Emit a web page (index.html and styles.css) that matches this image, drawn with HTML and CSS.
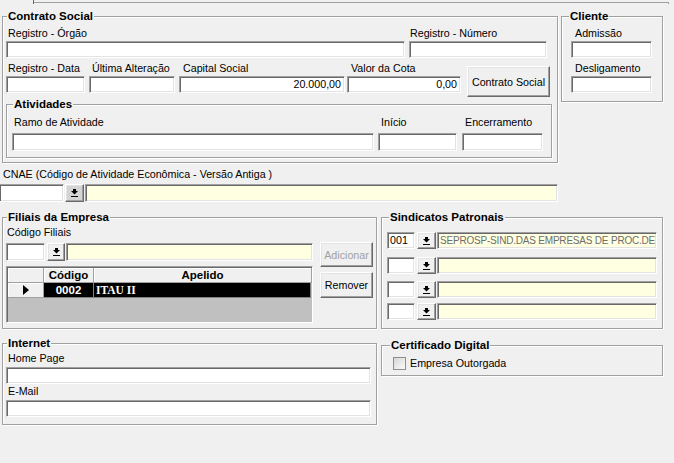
FILE: index.html
```html
<!DOCTYPE html>
<html lang="pt">
<head>
<meta charset="utf-8">
<title>Contrato Social</title>
<link rel="stylesheet" href="styles.css">
</head>
<body>
<div class="tabstrip"><div class="tab-left"></div><div class="tab-line"></div></div>

<div class="row top-row">
  <div class="group g-contrato">
    <span class="legend lg-contrato">Contrato Social</span>
    <div class="frow">
      <div class="field f-orgao"><span class="lbl">Registro - Órgão</span><div class="input"></div></div>
      <div class="field f-numero"><span class="lbl">Registro - Número</span><div class="input"></div></div>
    </div>
    <div class="frow r2">
      <div class="field f-data"><span class="lbl">Registro - Data</span><div class="input"></div></div>
      <div class="field f-ult"><span class="lbl">Última Alteração</span><div class="input"></div></div>
      <div class="field f-cap"><span class="lbl">Capital Social</span><div class="input val">20.000,00</div></div>
      <div class="field f-cota"><span class="lbl">Valor da Cota</span><div class="input val">0,00</div></div>
      <div class="btn btn-contrato">Contrato Social</div>
    </div>
    <div class="group g-ativ">
      <span class="legend lg-ativ">Atividades</span>
      <div class="frow">
        <div class="field f-ramo"><span class="lbl">Ramo de Atividade</span><div class="input tall"></div></div>
        <div class="field f-inicio"><span class="lbl">Início</span><div class="input tall"></div></div>
        <div class="field f-enc"><span class="lbl">Encerramento</span><div class="input tall"></div></div>
      </div>
    </div>
  </div>

  <div class="group g-cliente">
    <span class="legend lg-cliente">Cliente</span>
    <div class="field f-cli"><span class="lbl">Admissão</span><div class="input"></div></div>
    <div class="field f-cli f-cli2"><span class="lbl">Desligamento</span><div class="input"></div></div>
  </div>
</div>

<div class="cnae">
  <span class="lbl cnae-lbl">CNAE (Código de Atividade Econômica - Versão Antiga )</span>
  <div class="lookup lk-cnae">
    <div class="input lk-code"></div>
    <div class="btn lk-btn dark"><svg width="7" height="8" viewBox="0 0 7 8"><rect x="2" y="0" width="3" height="2" shape-rendering="crispEdges"/><path d="M0 2H7L3.5 5.6Z"/><rect x="0" y="7" width="7" height="1" shape-rendering="crispEdges"/></svg></div>
    <div class="desc lk-desc"></div>
  </div>
</div>

<div class="row mid-row">
  <div class="group g-filiais">
    <span class="legend lg-filiais">Filiais da Empresa</span>
    <div class="fil-body">
      <div class="fil-left">
        <span class="lbl fil-lbl">Código Filiais</span>
        <div class="lookup lk-fil">
          <div class="input lk-code"></div>
          <div class="btn lk-btn"><svg width="7" height="8" viewBox="0 0 7 8"><rect x="2" y="0" width="3" height="2" shape-rendering="crispEdges"/><path d="M0 2H7L3.5 5.6Z"/><rect x="0" y="7" width="7" height="1" shape-rendering="crispEdges"/></svg></div>
          <div class="desc lk-desc"></div>
        </div>
        <div class="grid">
          <div class="grow ghead">
            <div class="gc gind"></div>
            <div class="gc gcod">Código</div>
            <div class="gc gape">Apelido</div>
          </div>
          <div class="grow gsel">
            <div class="gc gind"><svg width="6" height="10" viewBox="0 0 6 10"><path d="M0 0L6 5L0 10Z"/></svg></div>
            <div class="gc gcod">0002</div>
            <div class="gc gape">ITAU II</div>
          </div>
        </div>
      </div>
      <div class="fil-right">
        <div class="btn btn-side disabled">Adicionar</div>
        <div class="btn btn-side btn-rem">Remover</div>
      </div>
    </div>
  </div>

  <div class="group g-sind">
    <span class="legend lg-sind">Sindicatos Patronais</span>
    <div class="lookup lk-sind">
      <div class="input lk-code">001</div>
      <div class="btn lk-btn"><svg width="7" height="8" viewBox="0 0 7 8"><rect x="2" y="0" width="3" height="2" shape-rendering="crispEdges"/><path d="M0 2H7L3.5 5.6Z"/><rect x="0" y="7" width="7" height="1" shape-rendering="crispEdges"/></svg></div>
      <div class="desc lk-desc sind-text">SEPROSP-SIND.DAS EMPRESAS DE PROC.DE</div>
    </div>
    <div class="lookup lk-sind s2">
      <div class="input lk-code"></div>
      <div class="btn lk-btn"><svg width="7" height="8" viewBox="0 0 7 8"><rect x="2" y="0" width="3" height="2" shape-rendering="crispEdges"/><path d="M0 2H7L3.5 5.6Z"/><rect x="0" y="7" width="7" height="1" shape-rendering="crispEdges"/></svg></div>
      <div class="desc lk-desc"></div>
    </div>
    <div class="lookup lk-sind s3">
      <div class="input lk-code"></div>
      <div class="btn lk-btn"><svg width="7" height="8" viewBox="0 0 7 8"><rect x="2" y="0" width="3" height="2" shape-rendering="crispEdges"/><path d="M0 2H7L3.5 5.6Z"/><rect x="0" y="7" width="7" height="1" shape-rendering="crispEdges"/></svg></div>
      <div class="desc lk-desc"></div>
    </div>
    <div class="lookup lk-sind s4">
      <div class="input lk-code"></div>
      <div class="btn lk-btn"><svg width="7" height="8" viewBox="0 0 7 8"><rect x="2" y="0" width="3" height="2" shape-rendering="crispEdges"/><path d="M0 2H7L3.5 5.6Z"/><rect x="0" y="7" width="7" height="1" shape-rendering="crispEdges"/></svg></div>
      <div class="desc lk-desc"></div>
    </div>
  </div>
</div>

<div class="row bottom-row">
  <div class="group g-internet">
    <span class="legend lg-internet">Internet</span>
    <span class="lbl">Home Page</span>
    <div class="input wide"></div>
    <span class="lbl lbl-mail">E-Mail</span>
    <div class="input wide"></div>
  </div>
  <div class="group g-cert">
    <span class="legend lg-cert">Certificado Digital</span>
    <div class="check-row"><span class="checkbox"></span><span class="check-lbl">Empresa Outorgada</span></div>
  </div>
</div>
</body>
</html>
```

FILE: styles.css
```css
* { box-sizing: border-box; }
html, body { margin: 0; padding: 0; }
body {
  width: 674px;
  height: 463px;
  overflow: hidden;
  background: #f0f0f0;
  font-family: "Liberation Sans", Arial, sans-serif;
  font-size: 10.7px;
  color: #000;
}

/* tab strip */
.tabstrip { display: flex; height: 4px; }
.tab-left { width: 34px; border-right: 1px solid #696969; }
.tab-line {
  width: 635px;
  height: 2px;
  margin-top: 2px;
  border-top: 1px solid #a0a0a0;
  border-right: 1px solid #a0a0a0;
}

.row { display: flex; align-items: flex-start; padding-left: 2px; }
.frow { display: flex; align-items: flex-start; }

/* group boxes */
.group {
  position: relative;
  border: 1px solid #a0a0a0;
  box-shadow: 1px 1px 0 #fff, inset 1px 1px 0 #fff;
}
.legend {
  position: absolute;
  top: -8px;
  padding: 0 1px;
  background: #f0f0f0;
  font-weight: bold;
  font-size: 11.5px;
  line-height: 14px;
  white-space: nowrap;
}
.lg-contrato, .lg-filiais, .lg-internet { left: 4px; }
.lg-ativ { left: 6px; }
.lg-cliente, .lg-sind { left: 7px; }
.lg-cert { left: 8px; }

.field { display: flex; flex-direction: column; }
.lbl {
  display: block;
  height: 14px;
  line-height: 13px;
  padding-left: 2px;
  white-space: nowrap;
}

.input {
  height: 17px;
  background: #fff;
  border: 1px solid;
  border-color: #a0a0a0 #fff #fff #a0a0a0;
  box-shadow: inset 1px 1px 0 #696969, inset -1px -1px 0 #e3e3e3;
  line-height: 15px;
  padding-left: 3px;
  white-space: nowrap;
  overflow: hidden;
}
.input.tall { height: 18px; line-height: 16px; }
.input.val { text-align: right; padding-right: 3px; }

.btn {
  display: flex;
  align-items: center;
  justify-content: center;
  background: #f0f0f0;
  border: 1px solid;
  border-color: #fff #696969 #696969 #fff;
  box-shadow: inset -1px -1px 0 #a0a0a0, inset 1px 1px 0 #e3e3e3;
  white-space: nowrap;
}
.btn.disabled { color: #a0a0a0; }
.btn.dark { background: #d4d4d4; }

/* Contrato Social */
.top-row { margin-top: 12px; gap: 3px; }
.g-contrato { width: 556px; height: 147px; padding: 10px 0 0 3px; }
.f-orgao { width: 399px; }
.f-numero { width: 138px; margin-left: 4px; }
.f-numero .lbl { padding-left: 1px; }
.r2 { margin-top: 4px; }
.f-data { width: 79px; }
.f-ult { width: 86px; margin-left: 4px; }
.f-ult .lbl { padding-left: 3px; }
.f-cap { width: 166px; margin-left: 4px; }
.f-cap .lbl, .f-cota .lbl { padding-left: 4px; }
.f-cota { width: 114px; margin-left: 2px; }
.btn-contrato { width: 83px; height: 31px; margin: 4px 0 0 6px; }

.g-ativ { width: 546px; height: 54px; margin-top: 7px; padding: 11px 0 0 5px; }
.g-ativ .lbl { margin-bottom: 3px; }
.f-ramo { width: 362px; }
.f-inicio { width: 79px; margin-left: 4px; }
.f-enc { width: 81px; margin-left: 5px; }
.f-inicio .lbl, .f-enc .lbl { padding-left: 3px; }

.g-cliente { width: 102px; height: 86px; padding: 10px 0 0 9px; }
.f-cli { width: 81px; }
.f-cli .lbl { padding-left: 4px; }
.f-cli2 { margin-top: 4px; }

/* CNAE */
.cnae { padding-top: 5px; }
.cnae-lbl { padding-left: 3px; }
.lookup { display: flex; height: 18px; }
.lk-cnae { margin-top: 2px; }
.lookup .input { height: 100%; }
.lk-btn { height: 100%; }
.lk-btn svg { fill: #000; }
.desc {
  height: 100%;
  background: #ffffe1;
  border: 1px solid;
  border-color: #a0a0a0 #fff #fff #a0a0a0;
  box-shadow: inset 1px 1px 0 #696969, inset -1px -1px 0 #e3e3e3;
  white-space: nowrap;
  overflow: hidden;
  line-height: 15px;
  padding-left: 2px;
  color: #6d6d6d;
}
.sind-text { font-size: 10px; letter-spacing: -0.2px; }
.lk-cnae .lk-code { width: 65px; margin-left: -1px; }
.lk-cnae .lk-btn { width: 19px; margin-left: 1px; }
.lk-cnae .lk-desc { width: 473px; margin-left: 1px; }

/* Filiais */
.mid-row { margin-top: 15px; gap: 4px; }
.g-filiais { width: 375px; height: 112px; padding: 8px 0 0 3px; }
.fil-body { display: flex; }
.fil-left { width: 307px; }
.fil-lbl { padding-left: 1px; }
.lk-fil { margin-top: 3px; }
.lk-fil .lk-code { width: 39px; }
.lk-fil .lk-btn { width: 18px; margin-left: 2px; }
.lk-fil .lk-desc { width: 247px; margin-left: 1px; }
.fil-right { width: 53px; margin-left: 7px; padding-top: 16px; }
.btn-side { height: 25px; }
.btn-rem { height: 26px; margin-top: 5px; }

.grid {
  margin-top: 5px;
  height: 57px;
  background: #c0c0c0;
  border: 1px solid;
  border-color: #a0a0a0 #fff #fff #a0a0a0;
  box-shadow: inset 1px 1px 0 #696969;
}
.grow { display: flex; }
.ghead { height: 16px; }
.gsel { height: 15px; }
.gc {
  display: flex;
  align-items: center;
  border-right: 1px solid #a0a0a0;
  border-bottom: 1px solid #a0a0a0;
  white-space: nowrap;
}
.gind { width: 36px; margin-left: 1px; background: #f0f0f0; justify-content: center; box-shadow: inset 1px 1px 0 #fff; }
.gcod { width: 50px; justify-content: center; font-weight: bold; font-size: 11.5px; }
.gape { flex: 1; font-weight: bold; font-size: 11.5px; }
.ghead .gc { background: #f0f0f0; box-shadow: inset 1px 1px 0 #fff; margin-top: 1px; }
.ghead .gape { justify-content: center; }
.gsel .gcod, .gsel .gape { background: #000; color: #fff; border-color: #808080; }
.gsel .gape { font-family: "Liberation Serif", "Times New Roman", serif; font-size: 11.5px; padding-left: 2px; margin-right: 1px; }

/* Sindicatos */
.g-sind { width: 282px; height: 112px; padding: 14px 0 0 5px; }
.lk-sind { height: 17px; }
.lk-sind .lk-code { width: 28px; padding-left: 2px; }
.lk-sind .lk-btn { width: 19px; margin-left: 2px; }
.lk-sind .lk-desc { width: 220px; margin-left: 1px; }
.s2 { margin-top: 8px; }
.s3 { margin-top: 7px; }
.s4 { margin-top: 5px; }

/* Internet / Certificado */
.bottom-row { margin-top: 14px; gap: 4px; }
.g-internet { width: 375px; height: 82px; padding: 8px 0 0 3px; }
.input.wide { width: 365px; margin-top: 1px; }
.lbl-mail { margin-top: 1px; }
.g-cert { width: 282px; height: 31px; margin-top: 2px; padding: 11px 0 0 11px; }
.check-row { display: flex; align-items: center; height: 13px; }
.checkbox {
  width: 13px;
  height: 13px;
  border: 1px solid #8e8f8f;
  background: linear-gradient(135deg, #d6d6d6, #fbfbfb);
}
.check-lbl { margin-left: 4px; line-height: 13px; }
```
